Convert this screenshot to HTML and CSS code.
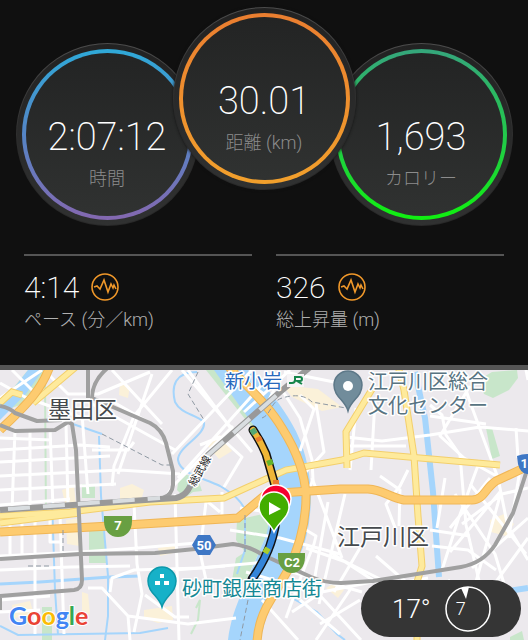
FILE: index.html
```
<!DOCTYPE html>
<html lang="ja">
<head>
  <meta charset="UTF-8">
  <meta name="viewport" content="width=device-width, initial-scale=1">
  <title>アクティビティ</title>
  <link rel="stylesheet" href="styles.css">
</head>
<body>
  <section class="summary">
    <div class="dials">
      <div class="dial time">
        <div class="ring">
          <span class="value">2:07:12</span>
          <span class="label">時間</span>
        </div>
      </div>
      <div class="dial distance">
        <div class="ring">
          <span class="value">30.01</span>
          <span class="label">距離 (km)</span>
        </div>
      </div>
      <div class="dial calories">
        <div class="ring">
          <span class="value">1,693</span>
          <span class="label">カロリー</span>
        </div>
      </div>
    </div>

    <div class="stats">
      <div class="stat">
        <div class="stat-row">
          <span class="stat-value">4:14</span>
          <svg class="pulse" viewBox="0 0 28 28">
            <circle cx="14" cy="14" r="13"/>
            <path d="M3 14l3-1 2 2 1 1 4-9 4 12 3-8 2 4 1-3 2 4"/>
          </svg>
        </div>
        <span class="stat-label">ペース (分／km)</span>
      </div>
      <div class="stat">
        <div class="stat-row">
          <span class="stat-value">326</span>
          <svg class="pulse" viewBox="0 0 28 28">
            <circle cx="14" cy="14" r="13"/>
            <path d="M3 14l3-1 2 2 1 1 4-9 4 12 3-8 2 4 1-3 2 4"/>
          </svg>
        </div>
        <span class="stat-label">総上昇量 (m)</span>
      </div>
    </div>
  </section>

  <section class="map">
    <svg class="map-canvas" viewBox="0 370 528 270">
      <!-- parks and buildings -->
      <g class="park">
        <path d="M28 370h20L20 405 0 412v-8z"/>
        <path d="M82 484h13v14H82z"/>
        <path d="M89 530h15l2 33H89z"/>
        <path d="M180 472l10 4 8 3 4 12-9 1-8 6-8-8z"/>
        <path d="M206 370h14l40 60-3 4z"/>
        <path d="M237 520l26-6 6 14-8 20-15 32-14 0 4-22 9-6-9-12z"/>
        <path d="M42 607h10v33H42z"/>
        <path d="M482 378l10-6 25-2 1 8-9 12-16 8-9-4-4-10z"/>
        <path d="M486 428h6l8 28-8 3z"/>
        <path d="M510 637l12-6 2 9h-14z"/>
      </g>
      <g class="block">
        <path d="M120 382l10 4-2 12-9-3z"/>
        <path d="M62 490l12-4 2 20-11-3z"/>
        <path d="M120 488l12-4 12 6-4 14h-20z"/>
        <path d="M206 444l14-9 12 16-13 8z"/>
        <path d="M66 520l14-2v28l-13-2z"/>
        <path d="M282 385l36 4 24 18-20 4-30-14z"/>
        <path d="M144 610l28-4 1 14-15 3-14-5z"/>
        <path d="M490 520l14-6 10 10-8 12-15-4z"/>
        <path d="M12 605l18-4 4 14-20 3z"/>
        <path d="M158 548l18-4 2 8-18 4z"/>
        <path d="M326 588l10-6 8 8-6 8z"/>
        <path d="M82 592l6 2 2 20-8 2z"/>
      </g>

      <!-- water -->
      <path class="water-area" d="M214 370h34c14 12 32 32 44 54 12 20 18 46 19 70 0 24-4 50-14 66l-18 28c-8 16-15 32-18 52h-33c2-18 8-34 14-48l24-56c4-16 6-30 5-44-1-24-6-46-17-66z"/>
      <path class="water-area" d="M28 370h15L26 394 0 420v-14z"/>
      <g class="water">
        <path d="M0 584l40-2 70-5 30-1"/>
        <path d="M99 436l2 60 7 80 0 40-3 24" class="thin"/>
        <path d="M197 372c-22 0-26 14-22 30 6 12 20 12 29 20 2 14-26 24-26 38 2 14 26 18 42 26 14 8 22 16 25 24v40l-8 24" class="thin"/>
        <path d="M52 500l3 90 3 45" class="thin"/>
        <path d="M0 626l18 9 122-2 28-5" class="thin"/>
        <path d="M70 423l32 11" class="thin"/>
        <path d="M415 372l10 46 8 74 6 85" class="canal"/>
        <path d="M292 598l25 14 20 22 8 6" class="thin"/>
        <path d="M508 591l20-3" class="canal"/>
      </g>
      <path class="green-line" d="M45 380l1 140M196 608l4-8-2 20-7 14"/>

      <!-- streets -->
      <g class="street">
        <path d="M0 383l25 14 60 22M12 370l30 30M0 398l42-28M44 370l24 24 30 0 52-22M112 370l50 54M152 374l-34 100M172 370l-38 46-20 50-2 20M85 400l90 50M110 400l52 30M182 370l70 82M188 370l44 60"/>
        <path d="M0 450l80-5 30 2M0 462l110-6M0 476l120-6 60 4M0 490l116-6M0 505l70-6M15 430l-3 80M30 430l0 76M50 428l3 80M66 424l2 80M82 414l6 80M0 438l52 2M92 450h36l6-8"/>
        <path d="M10 512v44M22 510v44M35 514v120M50 510v32h10M60 514l4 120M0 570l70-3 60-1M0 556l80-4 58-4 70-6M134 504l3 60 5 30-8 38M88 588h14l26 28 2 24M110 592l2-14 22-8 66-2 66-6M0 600l50-4M0 612l40-2M175 494l4 146M206 502l-6 50 6 28M208 502l12 10M222 492v30M128 616l60 8 48-6"/>
        <path d="M145 595l30 22 14 0M175 570l50-4M165 498l8-12 60-60M178 478l90-100M252 370l-80 84M290 370l-46 42M200 445l20-8 22 20-18 30M268 402l6-12M230 370l34 24"/>
        <path d="M300 395l14 14-14 42M316 404l8 48-20 22M282 390l18 28 12 42 1 20-9 20 2 30 10 6-2 8-12 30-16 44"/>
        <path d="M346 437l36 4 48-6 50-8 48 4M346 446l60 0M375 400l-4 70M356 408l-6 62M344 384l-60-12M430 416l56 8M430 405l12 10 4 20 14 20 6 70 14 60M408 470l-8 16-14 18 10 26M460 372l10 30 28 76 12 60M470 386l-30 50 24 22 36 20M480 460l-22 60-16 50M445 478l-8 50M490 478l-40 50"/>
        <path d="M312 478l30 80M345 494l-26 110M380 476l20 14-1 36M328 502l-14 80M306 548l40 14 40 20M330 552l58 38M360 548l-26 44M376 556l30 26 22-4M292 572l70 20M300 600l40 34M315 590l46 50M292 612l30-20 50-10M350 590l-34 50M360 600l-40 24M430 530l40 6M432 546l36 4 28 20M455 494l40 60 20 66M470 484l56 70M462 524l40-30 26-6M450 552l50-60M472 568l56-50M490 590l38-52M500 496l-28 100M520 470l-10 60 18 30M448 580l24 20"/>
        <path d="M240 508l28 4M230 530l50 8 60 16M246 572l60 18M262 600l36 40M526 370l2 10M516 428l2 30"/>
      </g>

      <!-- yellow and orange roads -->
      <g class="road-edge">
        <path d="M77 366L33 403M0 403l12-11 10 3"/>
        <path d="M0 516l70-4 80-10 74-4 22-10 40-18 56-10 22-7 56 5 80 7"/>
        <path d="M0 523l80-10"/>
        <path d="M374 386l-28 46 1 36M398 366l6 24 10 66 4 60 4 50-5 16v58"/>
      </g>
      <g class="road">
        <path d="M77 366L33 403M0 403l12-11 10 3"/>
        <path d="M0 516l70-4 80-10 74-4 22-10 40-18 56-10 22-7 56 5 80 7"/>
        <path d="M0 523l80-10"/>
        <path d="M374 386l-28 46 1 36M398 366l6 24 10 66 4 60 4 50-5 16v58"/>
      </g>
      <g class="highway-edge">
        <path d="M50 366c-8 22-20 36-50 64"/>
        <path d="M0 532l110-6 128-8 26-22q6-3 16-3l60-4h28c16 1 20 8 36 11h68c12 0 13-12 24-19l28-13"/>
        <path d="M228 366c18 20 40 38 54 62 14 22 23 44 24 68 0 24-6 50-18 74l-22 38q-8 16-9 34"/>
      </g>
      <g class="highway">
        <path d="M50 366c-8 22-20 36-50 64"/>
        <path d="M0 532l110-6 128-8 26-22q6-3 16-3l60-4h28c16 1 20 8 36 11h68c12 0 13-12 24-19l28-13"/>
        <path d="M228 366c18 20 40 38 54 62 14 22 23 44 24 68 0 24-6 50-18 74l-22 38q-8 16-9 34"/>
      </g>

      <!-- railways -->
      <g class="rail">
        <path d="M88 366v32M110 366q-18 14-18 32l58 25q12 6 16 20l7 28v14q-1 10-10 13"/>
        <path d="M0 406q10 2 15 7l22 8 25-1M0 425l15 6 40-1 13-8 4 2 4 26 6 130q0 9-8 10L0 596v14"/>
        <path d="M0 559l80-5 75-1 40-4 38-5q16 2 30 11l48 22q14 6 30 6l32-2 88-14q22-4 34-22l18-32 15-46q4-12 8-18"/>
      </g>
      <path class="rail-main" d="M0 510l160-11 16-1q8-2 12-8 10-18 20-35l72-63 34-28"/>
      <path class="rail-dash" d="M8 509l152-11M207 456l72-63"/>
      <g class="border-line">
        <path d="M102 434l60 31h12M198 372l-10 22 16 26M28 566h24M63 530v24M245 515v40M262 418c10-4 8-16 20-20q20-6 30 4l34 6M248 600l-8 40"/>
      </g>

      <!-- recorded track -->
      <path class="track-edge" d="M253 430q8 12 13 24l10 35v32q-4 30-24 58"/>
      <path class="track" d="M253 430q8 12 13 24l10 35v32"/>
      <path class="track-blue" d="M276 521q-4 30-24 58"/>
      <path class="track-teal" d="M252 429l3 5"/>
      <path class="track-red" d="M258 437l2 4M276 480v6"/>
      <path class="track-green" d="M269 460l2 5"/>
      <path class="track-lime" d="M268 548l-3 5"/>

      <!-- markers -->
      <path class="pin end" d="M276 526c-4-10-15-16-15-27a15 14 0 0 1 30 0c0 11-11 17-15 27z"/>
      <path class="pin start" d="M274 532c-4-10-15-14-15-25a15 15 0 0 1 30 0c0 11-11 15-15 25z"/>
      <path class="white" d="M269 502v13l12-6z"/>
      <path class="pin place" d="M348 411c-3-11-14-14-14-26a14 14 0 0 1 28 0c0 12-11 15-14 26z"/>
      <circle class="white" cx="348" cy="386" r="5"/>
      <path class="pin shop" d="M162 607c-3-11-14-14-14-26a14 14 0 0 1 28 0c0 12-11 15-14 26z"/>
      <path class="white" d="M160 574h4v4h-4zM155 581h5v4h-5zM164 581h5v4h-5z"/>

      <!-- route shields -->
      <path class="shield green" d="M104 516h28v5c0 10-6 16-14 16s-14-6-14-16z"/>
      <text class="shield-text" x="118" y="530">7</text>
      <path class="shield green" d="M278 553h27v4c0 10-6 16-13 16s-14-6-14-16z"/>
      <text class="shield-text" x="292" y="567">C2</text>
      <path class="shield blue" d="M198 535h12l6 10-6 10h-12l-6-10z"/>
      <text class="shield-text" x="204" y="550">50</text>
      <path class="shield blue" d="M517 456q10-4 20 0l-3 11q-2 6-7 7-7-1-9-10z"/>
      <text class="shield-text" x="528" y="468">14</text>

      <!-- place names -->
      <text class="district" x="48" y="418">墨田区</text>
      <text class="district" x="337" y="545">江戸川区</text>
      <text class="station" x="225" y="388">新小岩</text>
      <path class="jr-back" d="M287 374h17v13h-17z"/>
      <path class="jr" d="M289 383h3q3 0 3-3v-4M295 377h5q2 0 2 2t-2 2h-3l5 3"/>
      <text class="venue" x="368" y="389">江戸川区総合</text>
      <text class="venue" x="368" y="413">文化センター</text>
      <text class="venue street-name" x="182" y="596">砂町銀座商店街</text>
      <text class="line-name" transform="translate(195 487) rotate(-60)">総武線</text>
      <text class="google" x="9" y="625"><tspan class="g-blue">G</tspan><tspan class="g-red">o</tspan><tspan class="g-yellow">o</tspan><tspan class="g-blue">g</tspan><tspan class="g-green">l</tspan><tspan class="g-red">e</tspan></text>
    </svg>

    <div class="weather">
      <span class="temp">17°</span>
      <div class="wind">
        <svg class="compass" viewBox="0 0 46 46">
          <circle cx="23" cy="23" r="22"/>
          <path d="M16 2l7-1 1 0-3 12z"/>
        </svg>
        <span class="speed">7</span>
      </div>
    </div>
  </section>
</body>
</html>
```
FILE: styles.css
```
* {
  box-sizing: border-box;
}

body {
  margin: 0;
  background-color: #101010;
  color: #fff;
  font-family: Roboto, "Noto Sans CJK JP", sans-serif;
  font-weight: 300;
}

.summary {
  padding: 7px 24px 33px;
  border-bottom: 5px solid #555;
}

/* dials */
.dials {
  display: flex;
  justify-content: center;
  margin: 0 -24px;
}

.dial {
  width: 183px;
  height: 183px;
  margin-top: 36px;
  padding: 5px;
  border: 1px solid transparent;
  border-radius: 50%;
  background: linear-gradient(#222, #303131) padding-box,
    linear-gradient(#4c4c4c, #292929 60%) border-box;
}

.dial.distance {
  position: relative;
  margin: 0 -26px;
  box-shadow: 0 0 3px #111;
}

.ring {
  display: flex;
  flex-direction: column;
  align-items: center;
  height: 171px;
  padding-top: 60px;
  border: 4px solid transparent;
  border-radius: 50%;
}

.time .ring {
  background: linear-gradient(#232424, #303231) padding-box,
    linear-gradient(#2fa9d8, #5585c6 50%, #8468b0) border-box;
}

.distance .ring {
  background: linear-gradient(#232424, #303231) padding-box,
    linear-gradient(#ea7e30, #f2a02c) border-box;
}

.calories .ring {
  background: linear-gradient(#232424, #303231) padding-box,
    linear-gradient(#35a67c, #23c84c 50%, #10f010) border-box;
}

.value {
  font-size: 38px;
  font-weight: 200;
  line-height: 48px;
}

.label {
  margin-top: 4px;
  color: #8c8c8c;
  font-size: 18px;
  line-height: 28px;
}

/* stats */
.stats {
  display: grid;
  grid-template-columns: 1fr 1fr;
  gap: 24px;
  margin-top: 28px;
}

.stat {
  padding-top: 14px;
  border-top: 2px solid #555;
}

.stat-row {
  display: flex;
  align-items: center;
  gap: 12px;
  height: 34px;
}

.stat-value {
  font-size: 30px;
  font-weight: 200;
}

.pulse {
  width: 28px;
  height: 28px;
  fill: none;
  stroke: #f0982a;
  stroke-width: 1.6;
}

.stat-label {
  display: block;
  margin-top: 4px;
  color: #b0b0b0;
  font-size: 18px;
  line-height: 24px;
}

/* map */
.map {
  position: relative;
  background-color: #ece9ed;
  overflow: hidden;
}

.map-canvas {
  display: block;
  width: 100%;
  fill: none;
}

.park { fill: #c8e6ca; }
.block { fill: #fbf1d9; }
.water-area { fill: #a5d5fc; }
.water { stroke: #a5d5fc; stroke-width: 3; }
.water .thin { stroke-width: 2; }
.water .canal { stroke-width: 6; }
.green-line { stroke: #c8e6ca; stroke-width: 2; }
.street { stroke: #fff; stroke-width: 3; stroke-linejoin: round; }
.road-edge { stroke: #f3cf6c; stroke-width: 7; }
.road { stroke: #feea9c; stroke-width: 5; }
.highway-edge { stroke: #f0b656; stroke-width: 9; }
.highway { stroke: #fdcb70; stroke-width: 7; }
.rail { stroke: #a0a0a0; stroke-width: 4; stroke-linejoin: round; }
.rail-main { stroke: #999; stroke-width: 6; }
.rail-dash { stroke: #d9dde0; stroke-width: 4; stroke-dasharray: 22 13; }
.border-line { stroke: #8f99a3; stroke-width: 1; stroke-dasharray: 5 3; }

.track-edge { stroke: #111; stroke-width: 9; stroke-linecap: round; }
.track { stroke: #efb636; stroke-width: 6; stroke-linecap: round; }
.track-blue { stroke: #3485da; stroke-width: 6; }
.track-teal { stroke: #55a873; stroke-width: 6; }
.track-red { stroke: #ea7b2c; stroke-width: 6; }
.track-green { stroke: #62b52c; stroke-width: 6; }
.track-lime { stroke: #a8cc2d; stroke-width: 6; }

.pin { stroke: #fff; stroke-width: 1.5; }
.pin.end { fill: #f5002f; }
.pin.start { fill: #43ad00; }
.pin.place { fill: #718c9b; stroke: #5d7888; }
.pin.shop { fill: #16b1c8; stroke: #0c98ab; }
.white { fill: #fff; }

.shield.green { fill: #689f42; }
.shield.blue { fill: #3e77c5; }

.shield-text {
  fill: #fff;
  font-size: 13px;
  font-weight: 700;
  text-anchor: middle;
}

.district, .station, .venue, .line-name {
  stroke: #fff;
  stroke-width: 3;
  stroke-linejoin: round;
  paint-order: stroke;
  font-family: "Noto Sans CJK JP", sans-serif;
  font-weight: 400;
}

.district { fill: #45494d; font-size: 23px; }
.station { fill: #2869bd; font-size: 19px; }
.venue { fill: #587482; font-size: 20px; }
.street-name { fill: #148894; }
.line-name { fill: #222; font-size: 11px; }
.jr { stroke: #16864b; stroke-width: 2; }
.jr-back { fill: #f6f4f6; }

.google {
  stroke: #fff;
  stroke-width: 2;
  paint-order: stroke;
  font-family: Lato, sans-serif;
  font-size: 25px;
  font-weight: 700;
}

.g-blue { fill: #4285f4; }
.g-red { fill: #ea4335; }
.g-yellow { fill: #fbbc05; }
.g-green { fill: #34a853; }

.weather {
  position: absolute;
  right: 7px;
  bottom: 3px;
  display: flex;
  align-items: center;
  gap: 14px;
  width: 160px;
  height: 57px;
  padding-left: 31px;
  border-radius: 29px;
  background-color: #353535;
}

.temp {
  font-size: 26px;
}

.wind {
  display: grid;
  align-items: center;
}

.wind > * {
  grid-area: 1 / 1;
}

.compass {
  width: 46px;
  height: 46px;
}

.compass circle {
  fill: none;
  stroke: #fff;
  stroke-width: 1.5;
}

.compass path {
  fill: #fff;
}

.speed {
  padding-left: 11px;
  font-size: 18px;
}
```
